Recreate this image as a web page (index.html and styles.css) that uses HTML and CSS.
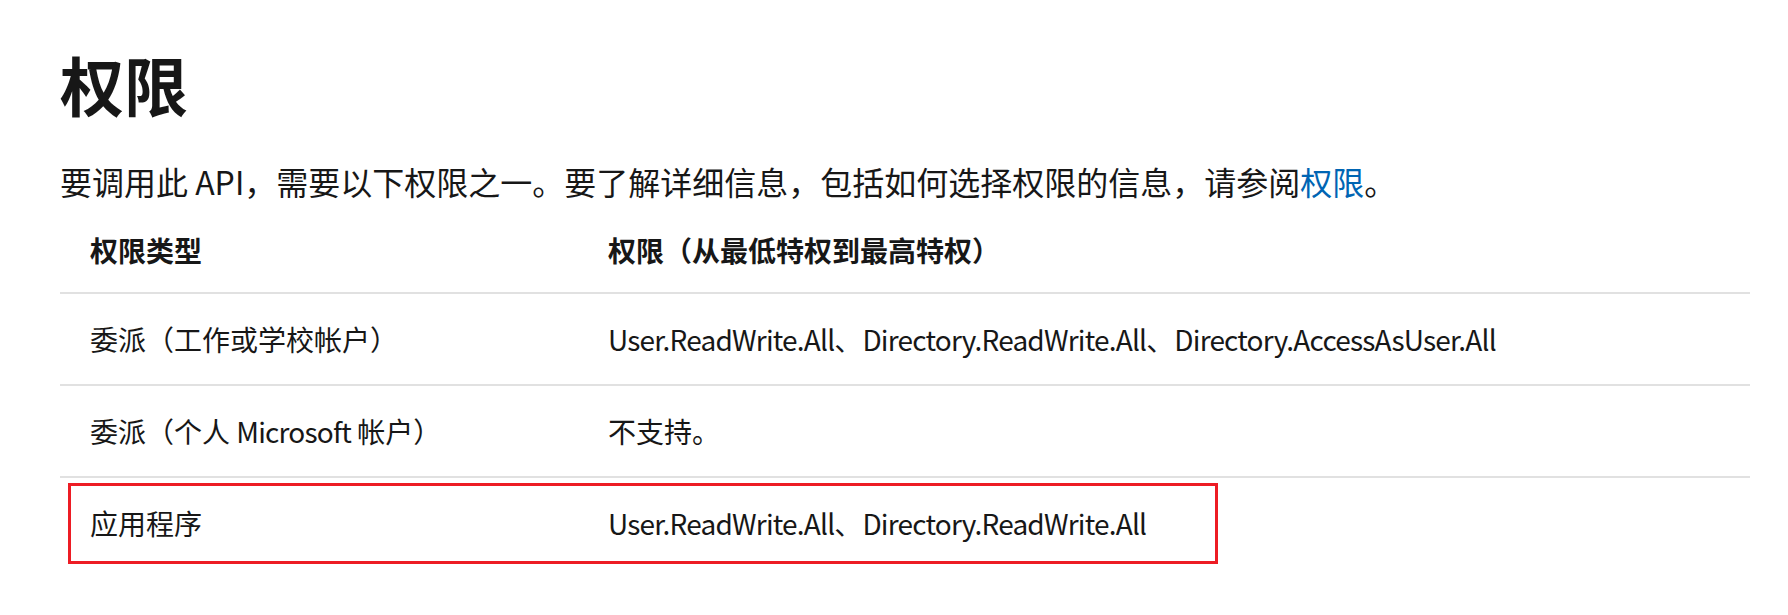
FILE: index.html
```html
<html>
<head>
    <title>权限</title>
    <link rel="stylesheet" href="styles.css">
</head>
<body>
    <div class="content">
        <h1>权限</h1>
        <p class="intro">要调用此 API，需要以下权限之一。要了解详细信息，包括如何选择权限的信息，请参阅<a href="#">权限</a>。</p>

        <!-- Permissions table -->
        <div class="table-wrap">
            <table class="perm-table">
                <thead>
                    <tr>
                        <th class="col-type">权限类型</th>
                        <th>权限（从最低特权到最高特权）</th>
                    </tr>
                </thead>
                <tbody>
                    <tr>
                        <td>委派（工作或学校帐户）</td>
                        <td><span class="scope">User.ReadWrite.All</span>、<span class="scope">Directory.ReadWrite.All</span>、<span class="scope">Directory.AccessAsUser.All</span></td>
                    </tr>
                    <tr>
                        <td>委派（个人 <span class="scope">Microsoft</span> 帐户）</td>
                        <td>不支持。</td>
                    </tr>
                    <tr>
                        <td>应用程序</td>
                        <td><span class="scope">User.ReadWrite.All</span>、<span class="scope">Directory.ReadWrite.All</span></td>
                    </tr>
                </tbody>
            </table>
            <div class="highlight"></div>
        </div>
    </div>
</body>
</html>
```

FILE: styles.css
```css
body, h1, p, table {
    margin: 0;
    padding: 0;
    box-sizing: border-box;
}

body {
    font-family: "Noto Sans CJK SC", "Noto Sans", sans-serif;
    color: #171717;
    background: #fff;
}

.content {
    width: 1690px;
    padding-left: 60px;
}

h1 {
    font-size: 64px;
    font-weight: 700;
    line-height: 83px;
    padding-top: 42px;
}

.intro {
    margin-top: 32px;
    font-size: 32px;
    line-height: 48px;
}

.intro a {
    color: #0065b3;
    text-decoration: none;
}

.table-wrap {
    position: relative;
    margin-top: 3px;
}

.perm-table {
    width: 100%;
    border-collapse: collapse;
    font-size: 28px;
    line-height: 42px;
}

.perm-table th {
    text-align: left;
    font-weight: 700;
    padding: 21px 30px;
    border-bottom: 2px solid #e1e1e1;
}

.perm-table th.col-type {
    width: 458px;
}

.perm-table td {
    padding: 24px 30px;
    border-bottom: 2px solid #e1e1e1;
}

.perm-table tbody tr:last-child td {
    border-bottom: none;
}

.scope {
    letter-spacing: -0.8px;
}

/* red annotation round the last row */
.highlight {
    position: absolute;
    left: 8px;
    top: 275px;
    width: 1150px;
    height: 81px;
    border: 3px solid #ed1c24;
    box-sizing: border-box;
}
```
